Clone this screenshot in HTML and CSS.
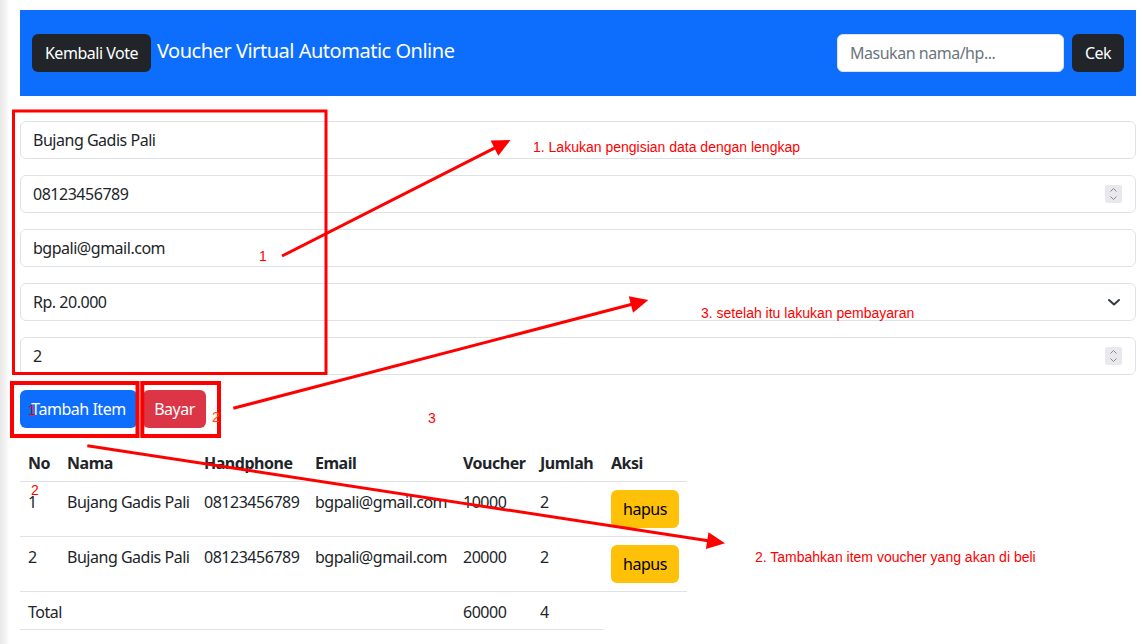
FILE: index.html
```html
<!DOCTYPE html>
<html lang="id">
<head>
<meta charset="utf-8">
<title>Voucher Virtual Automatic Online</title>
<link rel="stylesheet" href="styles.css">
</head>
<body>
<div class="page">
  <nav class="navbar">
    <div class="nav-left">
      <a class="btn btn-dark btn-back">Kembali Vote</a>
      <span class="brand">Voucher Virtual Automatic Online</span>
    </div>
    <div class="search">
      <input class="search-input" placeholder="Masukan nama/hp...">
      <button class="btn btn-dark btn-cek">Cek</button>
    </div>
  </nav>

  <div class="form">
    <div class="field"><span class="field-text">Bujang Gadis Pali</span></div>
    <div class="field"><span class="field-text">08123456789</span>
      <span class="spin"><svg width="17" height="18" viewBox="0 0 17 18"><path d="M5.5 6.5 L8.5 3.5 L11.5 6.5" fill="none" stroke="#8a8a8e" stroke-width="1"/><path d="M5.5 11.5 L8.5 14.5 L11.5 11.5" fill="none" stroke="#8a8a8e" stroke-width="1"/></svg></span>
    </div>
    <div class="field"><span class="field-text">bgpali@gmail.com</span></div>
    <div class="field"><span class="field-text field-select">Rp. 20.000</span>
      <svg class="chev" width="16" height="16" viewBox="0 0 16 16"><path d="M3 6 L8 10.5 L13 6" fill="none" stroke="#343a40" stroke-width="2" stroke-linecap="round" stroke-linejoin="round"/></svg>
    </div>
    <div class="field"><span class="field-text">2</span>
      <span class="spin"><svg width="17" height="18" viewBox="0 0 17 18"><path d="M5.5 6.5 L8.5 3.5 L11.5 6.5" fill="none" stroke="#8a8a8e" stroke-width="1"/><path d="M5.5 11.5 L8.5 14.5 L11.5 11.5" fill="none" stroke="#8a8a8e" stroke-width="1"/></svg></span>
    </div>
  </div>

  <div class="actions">
    <button class="btn btn-primary btn-add">Tambah Item</button>
    <button class="btn btn-danger btn-pay">Bayar</button>
  </div>

  <table class="items">
    <colgroup>
      <col class="c-no"><col class="c-nama"><col class="c-hp"><col class="c-email"><col class="c-voucher"><col class="c-jumlah"><col class="c-aksi">
    </colgroup>
    <thead>
      <tr><th>No</th><th>Nama</th><th>Handphone</th><th>Email</th><th>Voucher</th><th>Jumlah</th><th>Aksi</th></tr>
    </thead>
    <tbody>
      <tr><td>1</td><td>Bujang Gadis Pali</td><td>08123456789</td><td>bgpali@gmail.com</td><td>10000</td><td>2</td><td><button class="btn btn-warning">hapus</button></td></tr>
      <tr><td>2</td><td>Bujang Gadis Pali</td><td>08123456789</td><td>bgpali@gmail.com</td><td>20000</td><td>2</td><td><button class="btn btn-warning">hapus</button></td></tr>
      <tr class="total"><td colspan="4">Total</td><td>60000</td><td>4</td></tr>
    </tbody>
  </table>
</div>

<svg class="notes" width="1142" height="644" viewBox="0 0 1142 644">
  <g fill="none" stroke="#ff0000">
    <rect x="13.5" y="111" width="312.5" height="262.5" stroke-width="3"/>
    <rect x="12" y="383" width="125.5" height="53" stroke-width="4"/>
    <rect x="142.3" y="383" width="76.7" height="53" stroke-width="4"/>
  </g>
  <g stroke="#ff0000" stroke-width="3">
    <line x1="282" y1="256" x2="499.8" y2="145.4"/>
    <line x1="233.3" y1="408.3" x2="636.7" y2="303"/>
    <line x1="87.3" y1="445.7" x2="713.1" y2="541.5"/>
  </g>
  <g fill="#ff0000">
    <polygon points="510.5,140 498.3,155.7 490.6,140.6"/>
    <polygon points="648.3,300 633,312.7 628.8,296.3"/>
    <polygon points="725,543.3 705.9,549 708.5,532.2"/>
  </g>
  <g class="note-text">
    <text x="533" y="152">1. Lakukan pengisian data dengan lengkap</text>
    <text x="701" y="317.5">3. setelah itu lakukan pembayaran</text>
    <text x="755" y="562">2. Tambahkan item voucher yang akan di beli</text>
    <text x="259" y="261">1</text>
    <text x="28" y="415">1</text>
    <text x="212" y="422" class="orange">2</text>
    <text x="428" y="423">3</text>
    <text x="31" y="495">2</text>
  </g>
</svg>
</body>
</html>
```

FILE: styles.css
```css
html, body {
  margin: 0;
  padding: 0;
}

body {
  position: relative;
  width: 1142px;
  height: 644px;
  overflow: hidden;
  font-family: "Noto Sans", "Open Sans", sans-serif;
  font-size: 16px;
  line-height: 1.5;
  letter-spacing: -0.03em;
  color: #212529;
  background: linear-gradient(to right, #e8e8e8 0, #f4f4f4 6px, #fbfbfb 8px, #ffffff 9px);
}

.page {
  padding: 10px 6px 0 20px;
}

/* navbar */
.navbar {
  height: 86px;
  background: #0d6efd;
  display: flex;
  align-items: center;
  justify-content: space-between;
  padding: 0 12px;
}

.nav-left {
  display: flex;
  align-items: center;
}

.btn {
  display: inline-flex;
  align-items: center;
  justify-content: center;
  box-sizing: border-box;
  height: 38px;
  padding: 0 12px;
  border: 1px solid transparent;
  border-radius: 6px;
  font-family: inherit;
  font-size: 16px;
  line-height: 1.5;
  letter-spacing: inherit;
  white-space: nowrap;
  cursor: pointer;
}

.btn-dark {
  background: #212529;
  color: #ffffff;
}

.btn-back {
  width: 119px;
}

.brand {
  color: #ffffff;
  font-size: 20px;
  margin-left: 6px;
  margin-bottom: 4px;
}

.search {
  display: flex;
  align-items: center;
  gap: 8px;
}

.search-input {
  box-sizing: border-box;
  width: 227px;
  height: 38px;
  padding: 0 12px;
  border: 1px solid #dee2e6;
  border-radius: 6px;
  font-family: inherit;
  font-size: 16px;
  letter-spacing: inherit;
  color: #212529;
  background: #ffffff;
  outline: none;
}

.search-input::placeholder {
  color: #6c757d;
}

.btn-cek {
  width: 52px;
}

/* form */
.form {
  margin-top: 25px;
  display: flex;
  flex-direction: column;
  gap: 16px;
}

.field {
  box-sizing: border-box;
  height: 38px;
  border: 1px solid #dee2e6;
  border-radius: 6px;
  padding: 0 12px;
  display: flex;
  align-items: center;
  justify-content: space-between;
  background: #ffffff;
}

.field-text {
  color: #212529;
  white-space: nowrap;
}

.spin {
  display: flex;
  width: 17px;
  height: 18px;
  background: #e9e9ed;
  border-radius: 2px;
  margin-right: 1px;
}

.chev {
  margin-right: 1px;
}

/* actions */
.actions {
  margin-top: 15px;
  display: flex;
  gap: 6px;
}

.btn-primary {
  background: #0d6efd;
  color: #ffffff;
  width: 117px;
}

.btn-danger {
  background: #dc3545;
  color: #ffffff;
  width: 63px;
}

.btn-warning {
  background: #ffc107;
  color: #000000;
  width: 68px;
}

/* table */
.items {
  margin-top: 14px;
  border-collapse: collapse;
  table-layout: fixed;
  width: 667px;
}

.c-no { width: 39px; }
.c-nama { width: 137px; }
.c-hp { width: 111px; }
.c-email { width: 148px; }
.c-voucher { width: 77px; }
.c-jumlah { width: 71px; }
.c-aksi { width: 84px; }

.items th,
.items td {
  padding: 8px;
  text-align: left;
  vertical-align: top;
  border-bottom: 1px solid #dee2e6;
  white-space: nowrap;
}

.items th {
  font-weight: 700;
  padding-top: 9px;
  padding-bottom: 6px;
}

.items td .btn {
  vertical-align: top;
}

.items .total td {
  padding-bottom: 5px;
}

/* annotations */
.notes {
  position: absolute;
  left: 0;
  top: 0;
  pointer-events: none;
}

.note-text text {
  font-family: "Liberation Sans", Arial, sans-serif;
  font-size: 14px;
  letter-spacing: normal;
  fill: #ff0000;
}

.note-text .orange {
  fill: #ff4a00;
}
```
